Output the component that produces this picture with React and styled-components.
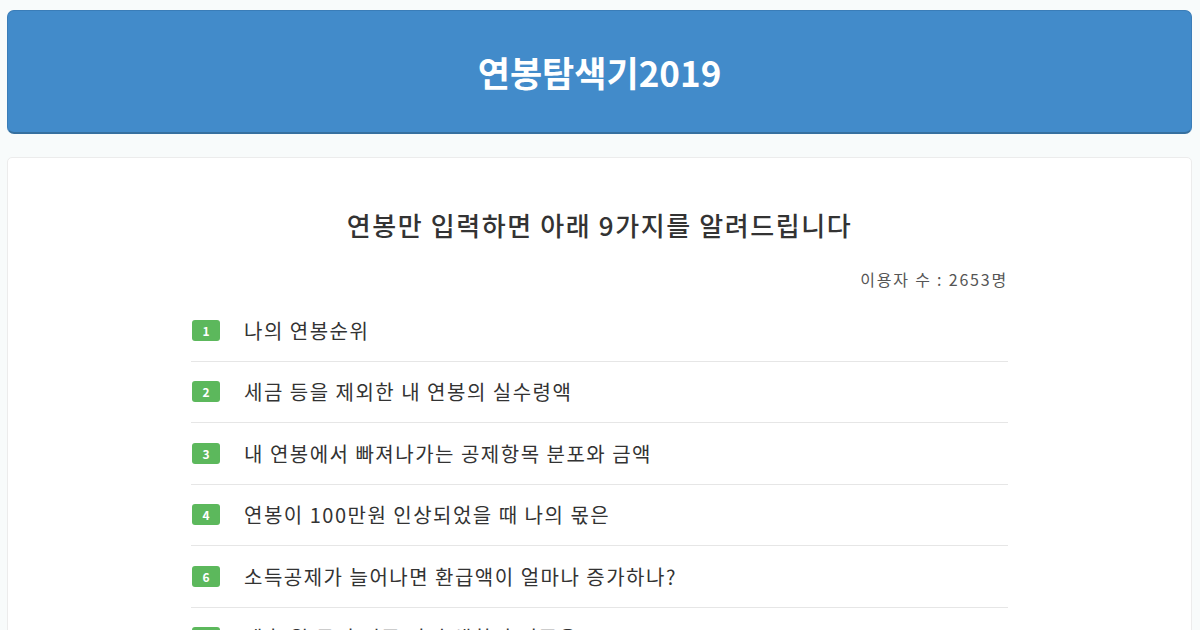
import React from "react";
import styled, { createGlobalStyle } from "styled-components";

const GlobalStyle = createGlobalStyle`
  html, body {
    margin: 0;
    padding: 0;
    background: #f8fbfb;
    font-family: "Noto Sans CJK KR", "Noto Sans", sans-serif;
    overflow: hidden;
  }
`;

const items = [
  { no: 1, text: "나의 연봉순위" },
  { no: 2, text: "세금 등을 제외한 내 연봉의 실수령액" },
  { no: 3, text: "내 연봉에서 빠져나가는 공제항목 분포와 금액" },
  { no: 4, text: "연봉이 100만원 인상되었을 때 나의 몫은" },
  { no: 6, text: "소득공제가 늘어나면 환급액이 얼마나 증가하나?" },
  { no: 7, text: "세후 월 급여 기준 나의 생활비 비중은?" },
];

const Page = styled.div`
  padding: 10px 8px 0 7px;
  display: flex;
  flex-direction: column;
  gap: 23px;
`;

const Header = styled.header`
  height: 121px;
  background: #428bca;
  border: 1px solid #3a7db8;
  border-bottom: 2px solid #36709f;
  border-radius: 7px;
  display: flex;
  align-items: center;
  justify-content: center;
`;

const Logo = styled.h1`
  margin: 0;
  color: #fff;
  font-size: 35px;
  font-weight: 700;
`;

const Card = styled.main`
  background: #fff;
  border: 1px solid #ececec;
  border-radius: 5px;
  min-height: 600px;
  display: flex;
  justify-content: center;
  padding-top: 46px;
`;

const Content = styled.div`
  width: 817px;
  display: flex;
  flex-direction: column;
`;

const Heading = styled.h2`
  margin: 0;
  text-align: center;
  font-size: 26px;
  font-weight: 500;
  letter-spacing: 1.6px;
  color: #333;
  line-height: 42px;
`;

const Users = styled.div`
  text-align: right;
  font-size: 16px;
  letter-spacing: 1.8px;
  color: #555;
  margin-top: 22px;
  line-height: 22px;
`;

const List = styled.ul`
  list-style: none;
  margin: 10px 0 0;
  padding: 0;
`;

const Row = styled.li`
  height: 60.5px;
  display: flex;
  align-items: center;
  gap: 24px;
  border-bottom: 1px solid #e6e6e6;
`;

const Badge = styled.span`
  width: 28px;
  height: 21px;
  margin-left: 1px;
  border-radius: 3px;
  background: #5cb85c;
  color: #fff;
  font-size: 12px;
  font-weight: 700;
  display: flex;
  align-items: center;
  justify-content: center;
`;

const Text = styled.span`
  font-size: 20px;
  letter-spacing: 1.5px;
  color: #333;
`;

export default function App() {
  return (
    <>
      <GlobalStyle />
      <Page>
        <Header>
          <Logo>연봉탐색기2019</Logo>
        </Header>
        <Card>
          <Content>
            <Heading>연봉만 입력하면 아래 9가지를 알려드립니다</Heading>
            <Users>이용자 수 : 2653명</Users>
            <List>
              {items.map((item) => (
                <Row key={item.no}>
                  <Badge>{item.no}</Badge>
                  <Text>{item.text}</Text>
                </Row>
              ))}
            </List>
          </Content>
        </Card>
      </Page>
    </>
  );
}
